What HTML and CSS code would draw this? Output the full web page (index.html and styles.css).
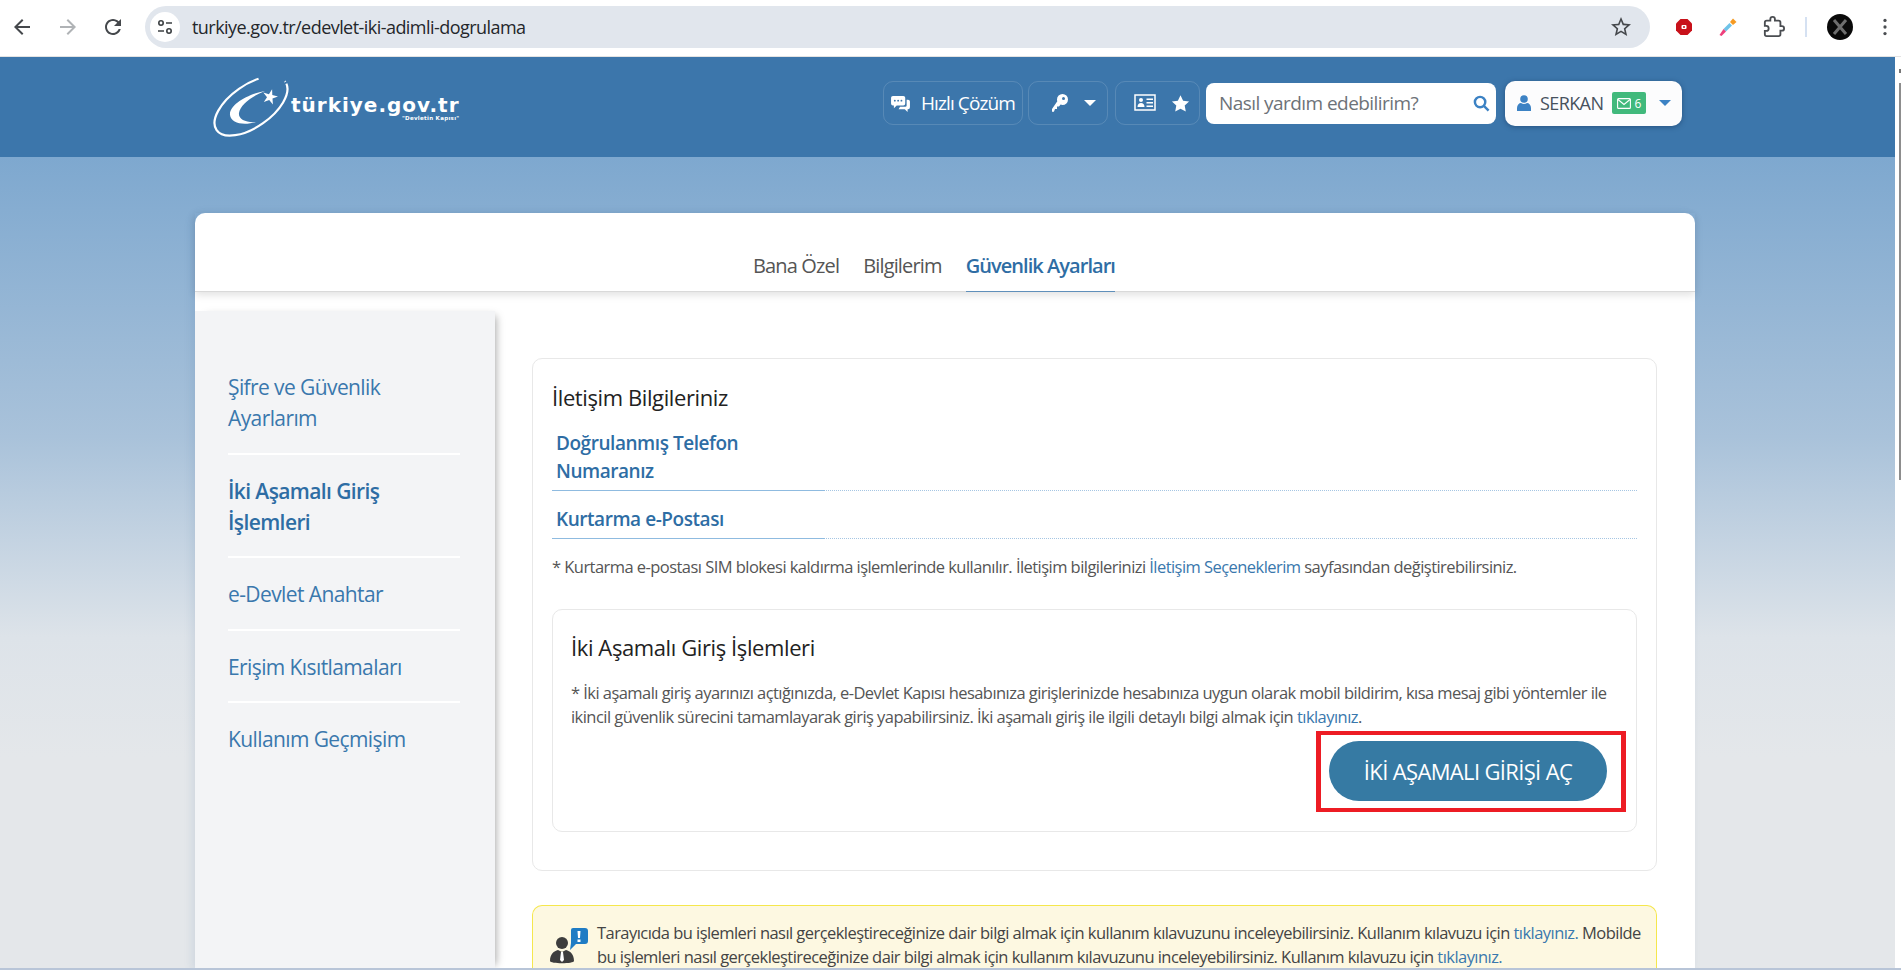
FILE: index.html
```html
<!DOCTYPE html>
<html lang="tr">
<head>
    <meta charset="UTF-8">
    <meta name="viewport" content="width=device-width, initial-scale=1.0">
    <title>e-Devlet Kapısı | İki Aşamalı Doğrulama</title>
    <link rel="stylesheet" href="styles.css">
</head>
<body>
    <!-- Browser toolbar -->
    <div class="toolbar">
        <svg class="tool-icon back" viewBox="0 0 24 24"><path d="M20 11H7.83l5.59-5.59L12 4l-8 8 8 8 1.41-1.41L7.83 13H20v-2z"/></svg>
        <svg class="tool-icon forward" viewBox="0 0 24 24"><path d="M4 11h12.17l-5.59-5.59L12 4l8 8-8 8-1.41-1.41L16.17 13H4v-2z"/></svg>
        <svg class="tool-icon reload" viewBox="0 0 24 24"><path d="M17.65 6.35C16.2 4.9 14.21 4 12 4c-4.42 0-7.99 3.58-7.99 8s3.57 8 7.99 8c3.73 0 6.84-2.55 7.73-6h-2.08c-.82 2.33-3.04 4-5.65 4-3.31 0-6-2.69-6-6s2.69-6 6-6c1.66 0 3.14.69 4.22 1.78L13 11h7V4l-2.35 2.35z"/></svg>
        <div class="address-bar">
            <span class="site-info">
                <svg viewBox="0 0 20 20" fill="none" stroke="#3c4043" stroke-width="1.6"><circle cx="6" cy="6" r="2.2"/><path d="M11 6h6M3 14h6"/><circle cx="14" cy="14" r="2.2"/></svg>
            </span>
            <span class="url">turkiye.gov.tr/edevlet-iki-adimli-dogrulama</span>
            <svg class="bookmark" viewBox="0 0 24 24"><path d="M22 9.24l-7.19-.62L12 2 9.19 8.63 2 9.24l5.46 4.73L5.82 21 12 17.27 18.18 21l-1.63-7.03L22 9.24zM12 15.4l-3.76 2.27 1-4.28-3.32-2.88 4.38-.38L12 6.1l1.71 4.04 4.38.38-3.32 2.88 1 4.28L12 15.4z"/></svg>
        </div>
        <svg class="ext ext-block" viewBox="0 0 18 18"><path fill="#c8111a" d="M5.5 1h7L17 5.5v7L12.500 17h-7L1 12.500v-7z"/><rect x="6.500" y="7" width="5" height="4" rx="1" fill="#fff"/><circle cx="9" cy="9" r="1" fill="#c8111a"/></svg>
        <svg class="ext ext-dropper" viewBox="0 0 20 20"><path fill="#f59a23" d="M12 5l3-3.500 3.500 3.500L15 8z"/><path fill="#6fc3e8" d="M11.500 6l2.500 2.500-6 6-2.500-2.500z"/><path fill="#ee3f7c" d="M5.500 12l2.500 2.500L3.500 19 1.500 18z"/></svg>
        <svg class="ext ext-puzzle" viewBox="0 0 24 24" fill="none" stroke="#4a4d51" stroke-width="2"><path d="M20.500 11H19V7c0-1.100-.9-2-2-2h-4V3.500C13 2.120 11.880 1 10.500 1S8 2.120 8 3.500V5H4c-1.100 0-2 .9-2 2v3.800h1.500c1.490 0 2.700 1.210 2.700 2.700s-1.210 2.700-2.700 2.700H2V20c0 1.100.9 2 2 2h13c1.100 0 2-.9 2-2v-4h1.500c1.380 0 2.500-1.120 2.500-2.500S21.880 11 20.500 11z"/></svg>
        <span class="tool-sep"></span>
        <span class="avatar">
            <svg viewBox="0 0 26 26" fill="none" stroke="#6e6e6e" stroke-width="3"><path d="M7 6l12 14M19 6L7 20"/></svg>
        </span>
        <svg class="kebab" viewBox="0 0 6 22" fill="#4a4d51"><circle cx="3" cy="3" r="2"/><circle cx="3" cy="11" r="2"/><circle cx="3" cy="19" r="2"/></svg>
    </div>

    <!-- Site header -->
    <header class="site-header">
        <a href="#" class="logo">
            <svg class="logo-mark" viewBox="0 0 78 58">
                <ellipse cx="39" cy="29" rx="42" ry="21" transform="rotate(-35 39 29)" fill="none" stroke="#fff" stroke-width="2.200" stroke-dasharray="172 28" stroke-dashoffset="-2"/>
                <path fill="#fff" d="M53 14C35 17 17 28 18 38c1 8 13 11 26 7-10 1-18-3-17-9 1-8 13-17 26-22z"/>
                <path fill="#fff" d="M60.100 12.300l.2 5.800 5.700 1.500-5.500 2 .4 5.900-3.700-4.600-5.400 2.100 3.200-4.800-3.700-4.600 5.600 1.600z"/>
            </svg>
            <span class="logo-text">
                <span class="logo-name">türkiye.gov.tr</span>
                <span class="logo-tag">"Devletin Kapısı"</span>
            </span>
        </a>
        <nav class="top-nav">
            <a href="#" class="nav-box nav-help">
                <svg class="nav-icon" viewBox="0 0 20 18" fill="#fff"><path d="M2 1h11a2 2 0 0 1 2 2v6a2 2 0 0 1-2 2H6l-3 3v-3H2a2 2 0 0 1-2-2V3a2 2 0 0 1 2-2z"/><path d="M16.500 5H18a2 2 0 0 1 2 2v6a2 2 0 0 1-2 2h-.5v3l-3-3H8l1.500-2.500H15a1.500 1.500 0 0 0 1.500-1.500z"/><g fill="#3c76ab"><circle cx="4" cy="6" r="1"/><circle cx="7.500" cy="6" r="1"/><circle cx="11" cy="6" r="1"/></g></svg>
                Hızlı Çözüm
            </a>
            <a href="#" class="nav-box nav-key">
                <svg class="nav-icon key-icon" viewBox="0 0 16 18" fill="#fff"><path d="M10.500 0a5.500 5.500 0 0 1 0 11c-.7 0-1.300-.1-1.900-.4L7 12.500H5V15H3l-1 2.500c-.5.500-1.500.500-2 0v-2.500L5.300 7.300C5.100 6.700 5 6.100 5 5.500A5.500 5.500 0 0 1 10.500 0z"/><circle cx="11.500" cy="4.500" r="1.500" fill="#3c76ab"/></svg>
                <span class="caret"></span>
            </a>
            <a href="#" class="nav-box nav-card">
                <svg class="card-icon" viewBox="0 0 22 18"><rect x="1" y="1" width="20" height="15" fill="none" stroke="#fff" stroke-width="1.500"/><circle cx="7" cy="6" r="2" fill="#fff"/><path fill="#fff" d="M3.500 13c0-2.500 1.500-4 3.500-4s3.500 1.500 3.500 4zM12.500 4.500H19V6h-6.500zM12.500 8H19v1.500h-6.500zM12.500 11.500H19V13h-6.500z"/></svg>
                <svg class="star-icon" viewBox="0 0 24 24" fill="#fff"><path d="M12 1.500l3.300 6.900 7.500 1-5.500 5.200 1.400 7.500L12 18.500l-6.700 3.600 1.400-7.500L1.200 9.400l7.500-1z"/></svg>
            </a>
            <div class="search-box">
                <span class="search-text">Nasıl yardım edebilirim?</span>
                <svg class="search-icon" viewBox="0 0 18 18" fill="none" stroke="#3c82c4" stroke-width="2.600"><circle cx="7.500" cy="7.500" r="5.500"/><path d="M11.500 11.500l5 5"/></svg>
            </div>
            <a href="#" class="user-box">
                <svg class="user-icon" viewBox="0 0 14 16" fill="#3c82c4"><circle cx="7" cy="4" r="3.800"/><path d="M0 16v-3c0-3 2-5 4-5 1 .6 2 1 3 1s2-.4 3-1c2 0 4 2 4 5v3z"/></svg>
                <span class="user-name">SERKAN</span>
                <span class="mail-badge">
                    <svg viewBox="0 0 14 11" fill="none" stroke="#fff" stroke-width="1.100"><rect x=".6" y=".6" width="12.800" height="9.800" rx="1"/><path d="M1 1.500l6 5 6-5"/></svg>
                    6
                </span>
                <span class="caret caret-blue"></span>
            </a>
        </nav>
    </header>

    <main class="page-bg">
        <div class="card">
            <div class="tabs">
                <a href="#" class="tab">Bana Özel</a>
                <a href="#" class="tab">Bilgilerim</a>
                <a href="#" class="tab active">Güvenlik Ayarları</a>
            </div>
            <div class="card-body">
                <aside class="side-menu">
                    <a href="#" class="side-item">Şifre ve Güvenlik Ayarlarım</a>
                    <a href="#" class="side-item active">İki Aşamalı Giriş İşlemleri</a>
                    <a href="#" class="side-item">e-Devlet Anahtar</a>
                    <a href="#" class="side-item">Erişim Kısıtlamaları</a>
                    <a href="#" class="side-item last">Kullanım Geçmişim</a>
                </aside>
                <section class="content">
                    <div class="panel">
                        <h2 class="panel-title">İletişim Bilgileriniz</h2>
                        <div class="info-row first">
                            <span class="info-label">Doğrulanmış Telefon Numaranız</span>
                        </div>
                        <div class="info-row">
                            <span class="info-label">Kurtarma e-Postası</span>
                        </div>
                        <p class="note">* Kurtarma e-postası SIM blokesi kaldırma işlemlerinde kullanılır. İletişim bilgilerinizi <a href="#">İletişim Seçeneklerim</a> sayfasından değiştirebilirsiniz.</p>

                        <div class="inner-panel">
                            <h2 class="panel-title">İki Aşamalı Giriş İşlemleri</h2>
                            <p class="inner-text">* İki aşamalı giriş ayarınızı açtığınızda, e-Devlet Kapısı hesabınıza girişlerinizde hesabınıza uygun olarak mobil bildirim, kısa mesaj gibi yöntemler ile ikincil güvenlik sürecini tamamlayarak giriş yapabilirsiniz. İki aşamalı giriş ile ilgili detaylı bilgi almak için <a href="#">tıklayınız</a>.</p>
                            <div class="action-row">
                                <div class="highlight">
                                    <button class="primary-btn">İKİ AŞAMALI GİRİŞİ AÇ</button>
                                </div>
                            </div>
                        </div>
                    </div>

                    <div class="warning">
                        <svg class="warning-icon" viewBox="0 0 38 38">
                            <circle cx="12" cy="16" r="6" fill="#3d3d3d"/>
                            <path fill="#3d3d3d" d="M0 34c0-7 4-10 8-11l4 2 4-2c4 1 8 4 8 11 0 3-24 3-24 0z"/>
                            <path fill="#fff" d="M11 25h2l1 8-2 2-2-2z"/>
                            <path fill="#1f7cc4" d="M23 1h12a3 3 0 0 1 3 3v10a3 3 0 0 1-3 3H26l-6 6 1-7V3a2 2 0 0 1 2-2z"/>
                            <path fill="#fff" d="M27.500 4h3l-.5 7h-2zM27.500 12.500h3v2.500h-3z"/>
                        </svg>
                        <p class="warning-text">Tarayıcıda bu işlemleri nasıl gerçekleştireceğinize dair bilgi almak için kullanım kılavuzunu inceleyebilirsiniz. Kullanım kılavuzu için <a href="#">tıklayınız.</a> Mobilde bu işlemleri nasıl gerçekleştireceğinize dair bilgi almak için kullanım kılavuzunu inceleyebilirsiniz. Kullanım kılavuzu için <a href="#">tıklayınız.</a></p>
                    </div>
                </section>
            </div>
        </div>
    </main>

    <!-- Window edge and page scrollbar -->
    <div class="scrollbar">
        <span class="scroll-arrow"></span>
        <span class="scroll-thumb"></span>
    </div>
    <div class="window-edge"></div>
</body>
</html>
```

FILE: styles.css
```css
* {
    margin: 0;
    padding: 0;
    box-sizing: border-box;
}

html, body {
    height: 970px;
    overflow: hidden;
}

body {
    font-family: "Open Sans", "Noto Sans", sans-serif;
    background: #fff;
    color: #333;
}

a {
    text-decoration: none;
    color: #3a78ad;
}

/* Browser toolbar */
.toolbar {
    height: 57px;
    background: #fff;
    border-bottom: 1px solid #e3e3e3;
    display: flex;
    align-items: center;
    padding: 0 0 2px 10px;
}

.tool-icon {
    width: 24px;
    height: 24px;
    fill: #45484c;
    flex: none;
}

.forward {
    margin-left: 22px;
    fill: #b0b3b6;
}

.reload {
    margin-left: 21px;
}

.address-bar {
    width: 1505px;
    height: 42px;
    margin-left: 20px;
    background: #e1e6ed;
    border-radius: 21px;
    display: flex;
    align-items: center;
    padding: 0 17px 0 5px;
    flex: none;
}

.site-info {
    width: 30px;
    height: 30px;
    border-radius: 50%;
    background: #fff;
    display: flex;
    align-items: center;
    justify-content: center;
    flex: none;
}

.site-info svg {
    width: 20px;
    height: 20px;
}

.url {
    margin-left: 12px;
    font-size: 18px;
    letter-spacing: -0.55px;
    color: #24272b;
    flex: 1;
}

.bookmark {
    width: 24px;
    height: 24px;
    fill: #45484c;
}

.ext {
    flex: none;
}

.ext-block {
    width: 18px;
    height: 18px;
    margin-left: 25px;
}

.ext-dropper {
    width: 20px;
    height: 20px;
    margin-left: 25px;
}

.ext-puzzle {
    width: 22px;
    height: 22px;
    margin-left: 25px;
}

.tool-sep {
    width: 2px;
    height: 20px;
    background: #d5e1f2;
    margin-left: 20px;
}

.avatar {
    width: 26px;
    height: 26px;
    margin-left: 20px;
    border-radius: 50%;
    background: #0a0a0a;
    display: flex;
}

.kebab {
    width: 6px;
    height: 18px;
    margin-left: 29px;
    flex: none;
}

/* Site header */
.site-header {
    height: 100px;
    background: #3c76ab;
    display: flex;
    align-items: center;
    justify-content: space-between;
    padding: 0 219px 8px 212px;
}

.logo {
    display: flex;
    align-items: center;
    color: #fff;
    margin-top: 5px;
}

.logo-mark {
    width: 78px;
    height: 58px;
    overflow: visible;
}

.logo-text {
    display: flex;
    flex-direction: column;
    align-items: flex-end;
    margin: 4px 0 0 1px;
}

.logo-name {
    font-family: "DejaVu Sans", sans-serif;
    font-weight: 700;
    font-size: 20px;
    line-height: 20px;
    letter-spacing: 1px;
}

.logo-tag {
    font-family: "DejaVu Sans", sans-serif;
    font-weight: 700;
    font-size: 5.5px;
    line-height: 6px;
    letter-spacing: 0.3px;
}

.top-nav {
    display: flex;
    align-items: center;
}

.nav-box {
    height: 44px;
    border: 1px solid rgba(255, 255, 255, 0.14);
    border-radius: 10px;
    display: flex;
    align-items: center;
    color: #fff;
    font-size: 19px;
    letter-spacing: -0.9px;
}

.nav-help {
    width: 140px;
    padding-left: 7px;
    gap: 11px;
}

.nav-icon {
    width: 19px;
    height: 17px;
}

.nav-key {
    width: 80px;
    margin-left: 5px;
    padding-left: 23px;
}

.key-icon {
    width: 16px;
    height: 18px;
}

.caret {
    width: 0;
    height: 0;
    margin-left: 16px;
    border-left: 6px solid transparent;
    border-right: 6px solid transparent;
    border-top: 6px solid #fff;
}

.nav-card {
    width: 85px;
    margin-left: 7px;
    padding-left: 18px;
    gap: 15px;
}

.card-icon {
    width: 22px;
    height: 18px;
}

.star-icon {
    width: 19px;
    height: 19px;
}

.search-box {
    width: 290px;
    height: 41px;
    margin-left: 6px;
    background: #fff;
    border-radius: 8px;
    display: flex;
    align-items: center;
    justify-content: space-between;
    padding: 0 6px 0 13px;
}

.search-text {
    font-size: 19px;
    letter-spacing: -0.56px;
    color: #6d7278;
}

.search-icon {
    width: 17px;
    height: 17px;
}

.user-box {
    width: 177px;
    height: 45px;
    margin-left: 9px;
    background: #fcfcfd;
    border-radius: 10px;
    box-shadow: 0 1px 5px rgba(20, 50, 90, 0.5);
    display: flex;
    align-items: center;
    padding-left: 12px;
    color: #47525e;
}

.user-icon {
    width: 14px;
    height: 16px;
}

.user-name {
    margin-left: 9px;
    font-size: 18px;
    letter-spacing: -0.6px;
}

.mail-badge {
    width: 34px;
    height: 22px;
    margin-left: 9px;
    background: #41b97c;
    border-radius: 2px;
    color: #fff;
    font-size: 12px;
    display: flex;
    align-items: center;
    justify-content: center;
    gap: 3px;
}

.mail-badge svg {
    width: 14px;
    height: 11px;
}

.caret-blue {
    margin-left: 13px;
    border-top-color: #3c82c4;
}

/* Page */
.page-bg {
    height: 813px;
    overflow: hidden;
    padding: 56px 206px 0 195px;
    background: linear-gradient(#7ea8cf 0, #a9c2da 280px, #dde3e9 480px, #e4e7ea 600px);
}

.card {
    background: #fff;
    border-radius: 10px 10px 0 0;
    box-shadow: -3px 0 8px rgba(60, 100, 150, 0.12);
    height: 757px;
}

.tabs {
    height: 79px;
    display: flex;
    justify-content: center;
    align-items: flex-end;
    gap: 24px;
    padding-right: 22px;
    border-bottom: 1px solid #d9d9d9;
    box-shadow: 0 3px 8px rgba(0, 0, 0, 0.12);
}

.tab {
    height: 40px;
    font-size: 20px;
    line-height: 27px;
    letter-spacing: -0.85px;
    color: #555;
    margin-bottom: -1px;
    border-bottom: 1px solid transparent;
}

.tab.active {
    color: #2e6da4;
    font-weight: 600;
    letter-spacing: -0.95px;
    border-bottom-color: #5f8fba;
}

.card-body {
    display: flex;
    padding-top: 19px;
}

.side-menu {
    width: 300px;
    height: 659px;
    flex: none;
    padding: 40px 28px 0 33px;
    background: #f3f4f6;
    box-shadow: 6px 0 8px -5px rgba(0, 0, 0, 0.35);
    display: flex;
    flex-direction: column;
}

.side-item {
    padding: 21px 30px 18.5px 0;
    font-size: 21px;
    line-height: 31px;
    letter-spacing: -0.6px;
    border-bottom: 2px solid #fff;
    width: 232px;
}

.side-item.active {
    font-weight: 600;
    color: #2e6da4;
}

.side-item.last {
    border-bottom: none;
}

.content {
    flex: 1;
    padding: 47px 38px 0 37px;
}

.panel {
    border: 1px solid #e8e8e8;
    border-radius: 10px;
    padding: 24px 19px 38px;
}

.panel-title {
    font-size: 22px;
    line-height: 28px;
    font-weight: 500;
    letter-spacing: -0.4px;
    color: #222;
}

.info-row {
    display: flex;
    border-bottom: 1px dotted #a6c6e3;
}

.info-row.first {
    margin-top: 18px;
}

.info-label {
    width: 273px;
    padding: 14px 60px 5px 4px;
    margin-bottom: -1px;
    border-bottom: 1px solid #8fbbe0;
    font-size: 19px;
    line-height: 28px;
    font-weight: 600;
    letter-spacing: -0.45px;
    color: #2e6da4;
}

.info-row.first .info-label {
    padding-top: 0;
}

.note {
    margin-top: 16px;
    font-size: 16.5px;
    line-height: 24px;
    letter-spacing: -0.55px;
    color: #555;
}

.note a,
.inner-text a,
.warning-text a {
    color: #3a78ad;
}

.inner-panel {
    margin-top: 30px;
    border: 1px solid #e8e8e8;
    border-radius: 10px;
    padding: 23px 10px 19px 16px;
}

.inner-text {
    margin-top: 20px;
    padding-right: 9px;
    font-size: 16.5px;
    line-height: 24px;
    letter-spacing: -0.55px;
    color: #555;
}

.inner-panel .panel-title,
.inner-text {
    margin-left: 2px;
}

.action-row {
    display: flex;
    justify-content: flex-end;
    margin-top: 2px;
}

.highlight {
    border-style: solid;
    border-color: #ed1c24;
    border-width: 4px 5px;
    padding: 6px 14px 7px 8px;
}

.primary-btn {
    display: block;
    width: 278px;
    height: 60px;
    border: none;
    border-radius: 30px;
    background: #367aa3;
    color: #fff;
    font-family: inherit;
    font-size: 22px;
    letter-spacing: -0.65px;
}

.warning {
    margin-top: 34px;
    height: 66px;
    display: flex;
    padding: 15px 12px 0 17px;
    gap: 9px;
    background: #fdf8e1;
    border: 1px solid #f5e74d;
    border-bottom: none;
    border-radius: 10px 10px 0 0;
}

.warning-icon {
    width: 38px;
    height: 38px;
    flex: none;
    margin-top: 6px;
}

.warning-text {
    font-size: 16.5px;
    line-height: 24px;
    letter-spacing: -0.55px;
    color: #444;
}

/* Overlays */
.scrollbar {
    position: fixed;
    top: 57px;
    right: 0;
    bottom: 0;
    width: 6px;
    background: #fff;
    display: flex;
    flex-direction: column;
    align-items: flex-end;
}

.scroll-arrow {
    width: 2px;
    height: 4px;
    margin-top: 12px;
    background: #777;
}

.scroll-thumb {
    width: 2px;
    height: 397px;
    margin-top: 10px;
    background: #8d8d8d;
}

.window-edge {
    position: fixed;
    left: 0;
    right: 0;
    bottom: 0;
    height: 2px;
    background: #b8c5d8;
}
```
